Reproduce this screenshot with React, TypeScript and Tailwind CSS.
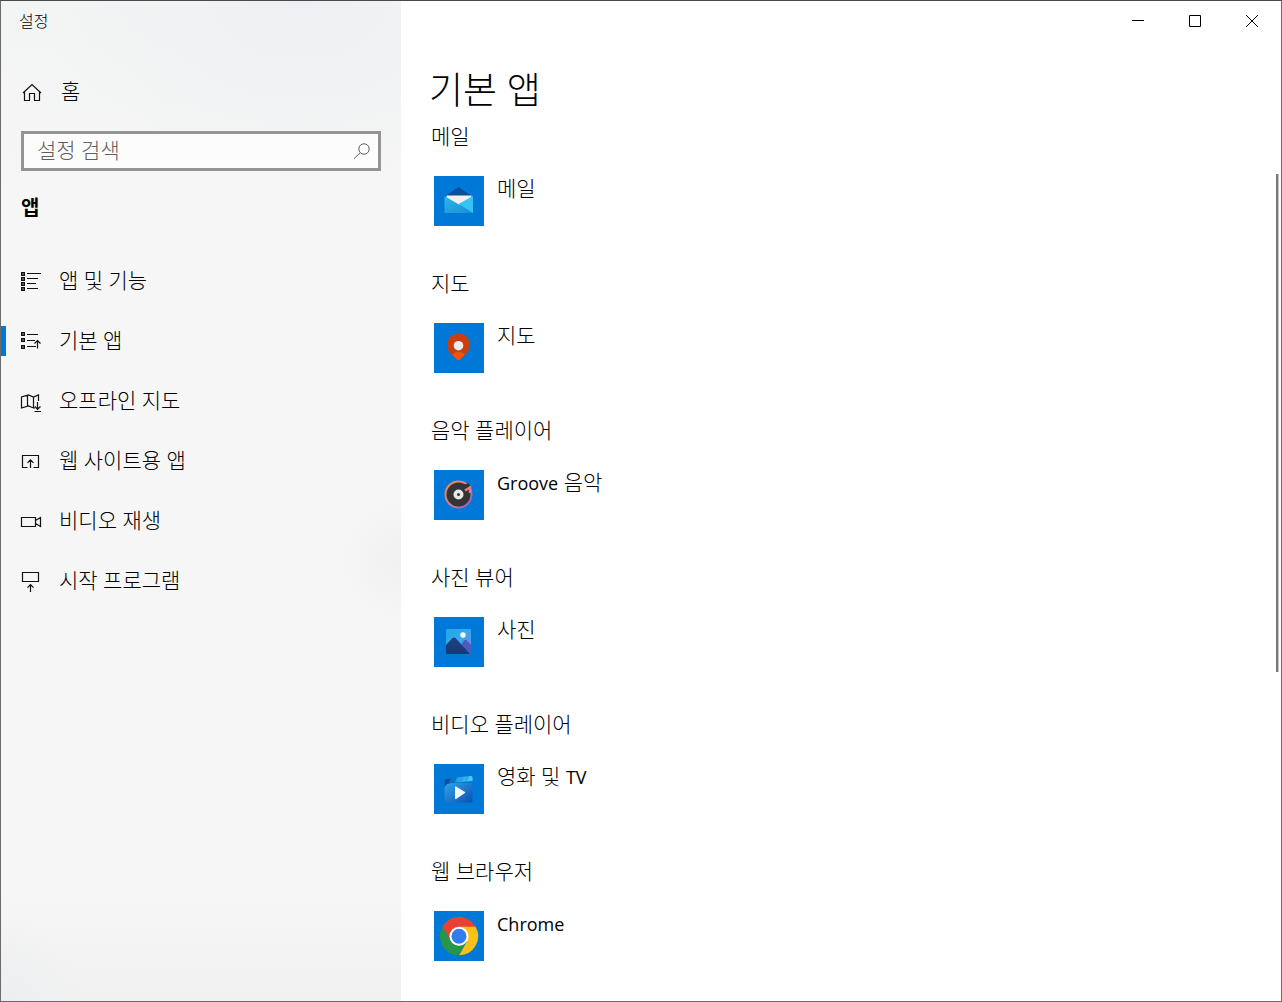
import { useState } from 'react';

/* ─── Sidebar icons ─── */
const stroke = { fill: 'none', stroke: '#111', strokeWidth: 1.2 };

function HomeIcon() {
  return (
    <svg viewBox="0 0 24 24" className="w-6 h-6 shrink-0" {...stroke}>
      <path d="m4 13 9-8.500L22 13M5.500 11.800v8.700h5v-7h5v7h5v-8.700" />
    </svg>
  );
}

function AppsIcon() {
  return (
    <svg viewBox="0 0 24 24" className="w-6 h-6 shrink-0" {...stroke}>
      <path strokeWidth="1.4" d="M2.700 3.700h2.600v2.600H2.700zM2.700 8.700h2.600v2.600H2.700zM2.700 13.700h2.600v2.600H2.700zM2.700 18.700h2.600v2.600H2.700z" />
      <path strokeWidth="1" d="M8 4.500h14M8 9.500h11M8 14.500h9M8 19.500h11" />
    </svg>
  );
}

function DefaultAppsIcon() {
  return (
    <svg viewBox="0 0 24 24" className="w-6 h-6 shrink-0" {...stroke}>
      <path strokeWidth="1.4" d="M2.700 3.700h2.600v2.600H2.700zM2.700 9.700h2.600v2.600H2.700zM2.700 16.700h2.600v2.600H2.700z" />
      <path strokeWidth="1" d="M8 5.500h11M8 11.500h8M8 17.500h9" />
      <path d="M18.500 19.500v-8M15.500 14.500l3-3 3 3" />
    </svg>
  );
}

function OfflineMapIcon() {
  return (
    <svg viewBox="0 0 24 24" className="w-6 h-6 shrink-0" {...stroke}>
      <path d="M19.500 12V6l-5 2-5-2-7 2v11l7-2 5 2H16M8.500 6v11M14.500 8v11M18.500 13v7M16 17.500l2.500 2.800 3-2.800M15.500 22.500H22" />
    </svg>
  );
}

function WebAppsIcon() {
  return (
    <svg viewBox="0 0 24 24" className="w-6 h-6 shrink-0" {...stroke}>
      <path d="M8.500 18.500h-5v-12h16v12h-5M11.500 19v-8M8.500 13.800l3-3 3 3" />
    </svg>
  );
}

function VideoIcon() {
  return (
    <svg viewBox="0 0 24 24" className="w-6 h-6 shrink-0" {...stroke}>
      <path d="M2.500 8.500h14v9h-14zM16.500 11.500l5-3v9l-5-3" />
    </svg>
  );
}

function StartupIcon() {
  return (
    <svg viewBox="0 0 24 24" className="w-6 h-6 shrink-0" {...stroke}>
      <path d="M3.500 3.500h16v9h-16zM11.500 23v-7M8.500 18.700l3-3 3 3" />
    </svg>
  );
}

/* ─── App tiles ─── */
function MailLogo() {
  return (
    <svg viewBox="0 0 50 50" className="w-full h-full">
      <defs>
        <linearGradient id="mail" x1="0" y1="0" x2="1" y2="1">
          <stop offset="0" stopColor="#2fb4ea" />
          <stop offset="1" stopColor="#1590d8" />
        </linearGradient>
      </defs>
      <path fill="#0a4f9c" d="m11.500 20 13-9 13.500 9v4H11.500z" />
      <path fill="#f0f0f2" d="M12.500 19.500h25v2L25 29l-12.500-7z" />
      <path fill="url(#mail)" d="M10.500 20 39 37H10.500z" />
      <path fill="#36c5f2" d="M39 20v17l-14.500-9z" />
    </svg>
  );
}

function MapsLogo() {
  return (
    <svg viewBox="0 0 50 50" className="w-full h-full">
      <path fill="#cb3e0e" d="M24.500 10.500C18 10.500 13 15.500 13 22c0 4 2 7 5 9.500l5 5q1.500 1 3 0l5-5c3-2.500 5-5.500 5-9.500 0-6.500-5-11.500-11.500-11.500" />
      <path fill="#e9561a" d="M18 31.500q6.500-5.500 13 0l-5 5q-1.500 1-3 0z" />
      <circle cx="24.500" cy="22.700" r="4.800" fill="#ececec" />
    </svg>
  );
}

function GrooveLogo() {
  return (
    <svg viewBox="0 0 50 50" className="w-full h-full">
      <defs>
        <linearGradient id="groove" x1="0" y1="0" x2="1" y2="1">
          <stop offset="0.1" stopColor="#f28a4b" />
          <stop offset="0.5" stopColor="#d77b91" />
          <stop offset="1" stopColor="#8b55d6" />
        </linearGradient>
      </defs>
      <circle cx="24.500" cy="24.500" r="14" fill="url(#groove)" />
      <circle cx="24.500" cy="24.500" r="12" fill="#343436" />
      <path fill="#343436" d="m30 15 4-2 2.500 3-4 3z" />
      <path fill="none" stroke="#e07c86" strokeWidth="2.500" d="m31 20.500 5-3v5.500" />
      <circle cx="24.500" cy="24.500" r="5" fill="#e8e8e8" />
      <circle cx="24.500" cy="24.500" r="1.500" fill="#333" />
    </svg>
  );
}

function PhotosLogo() {
  return (
    <svg viewBox="0 0 50 50" className="w-full h-full">
      <defs>
        <linearGradient id="photoSky" x1="0" y1="0" x2="1" y2="1">
          <stop offset="0" stopColor="#20a7e8" />
          <stop offset="0.5" stopColor="#36a9ec" />
          <stop offset="1" stopColor="#8a7bdc" />
        </linearGradient>
        <linearGradient id="photoHill" x1="0" y1="0" x2="0" y2="1">
          <stop offset="0" stopColor="#1c4380" />
          <stop offset="1" stopColor="#153a78" />
        </linearGradient>
      </defs>
      <rect x="12" y="12" width="25" height="25" rx="1" fill="url(#photoSky)" />
      <path fill="#4a5cc0" d="m25 31 5-7.500q1.500-1.500 3 0l4 4.500v8q0 1-1 1H25z" />
      <path fill="url(#photoHill)" d="m12 28 6.500-7q1.500-1 3 0L36 37H13q-1 0-1-1z" />
      <circle cx="29" cy="18" r="2.700" fill="#f4fbff" />
    </svg>
  );
}

function MoviesLogo() {
  return (
    <svg viewBox="0 0 50 50" className="w-full h-full">
      <defs>
        <linearGradient id="movieBody" x1="0" y1="0" x2="1" y2="1">
          <stop offset="0" stopColor="#2fa6e6" />
          <stop offset="1" stopColor="#0a4fb4" />
        </linearGradient>
        <linearGradient id="movieClap" x1="0" y1="0" x2="1" y2="0">
          <stop offset="0" stopColor="#1f95dc" />
          <stop offset="1" stopColor="#46d4fa" />
        </linearGradient>
      </defs>
      <path fill="#0f6cc0" d="m16 15-2 7h6v-7z" />
      <path fill="#0b519f" d="m12 15 4.500-.5-2.500 7L10.500 24v-7q0-2 1.500-2" />
      <path fill="url(#movieClap)" d="m23 13.500 14-1.500q1.500 0 1.500 1.500V17L21 18.500z" />
      <path stroke="#1b9ade" strokeWidth="1" d="m29 12.500-2.500 6M34 12l-2.500 6" />
      <path fill="url(#movieBody)" d="M12 21.500q0-1 1.500-1.500l5-1h19q1 0 1 1v17q0 1.500-1.500 1.500H12q-1.500 0-1.500-1.500V23z" />
      <path fill="#f3f3f3" d="M21 23q0-1 1-.5l9 5.500q.7.500 0 1l-9 6q-1 .5-1-.5z" />
    </svg>
  );
}

function ChromeLogo() {
  return (
    <svg viewBox="0 0 50 50" className="w-full h-full">
      <path fill="#e94235" d="M8.500 15.500a19 19 0 0 1 33 0l.5.500H25l-8.200 14z" />
      <path fill="#fbc116" d="M41.600 15.700A19 19 0 0 1 25 44.200l8.200-14.300L25 15.700z" />
      <path fill="#28964a" d="M25 44.200A19 19 0 0 1 8.600 15.500l8.200 14.300L33 30z" />
      <circle cx="25" cy="25.200" r="9.500" fill="#fff" />
      <circle cx="25" cy="25.200" r="7.500" fill="#347bed" />
    </svg>
  );
}

/* ─── Data ─── */
const NAV_ITEMS = [
  { label: '앱 및 기능', icon: <AppsIcon /> },
  { label: '기본 앱', icon: <DefaultAppsIcon /> },
  { label: '오프라인 지도', icon: <OfflineMapIcon /> },
  { label: '웹 사이트용 앱', icon: <WebAppsIcon /> },
  { label: '비디오 재생', icon: <VideoIcon /> },
  { label: '시작 프로그램', icon: <StartupIcon /> },
];

const latin = 'font-normal text-[18px]';

const DEFAULT_APPS = [
  { category: '메일', app: '메일', logo: <MailLogo /> },
  { category: '지도', app: '지도', logo: <MapsLogo /> },
  { category: '음악 플레이어', app: <><span className={latin}>Groove</span> 음악</>, logo: <GrooveLogo /> },
  { category: '사진 뷰어', app: '사진', logo: <PhotosLogo /> },
  { category: '비디오 플레이어', app: <>영화 및 <span className={latin}>TV</span></>, logo: <MoviesLogo /> },
  { category: '웹 브라우저', app: <span className={latin}>Chrome</span>, logo: <ChromeLogo /> },
];

function Sidebar() {
  const [active, setActive] = useState('기본 앱');
  const [query, setQuery] = useState('');

  return (
    <aside className="w-[400px] shrink-0 bg-[#f6f6f6] bg-[radial-gradient(260px_180px_at_75%_0%,#edeff2_0,#f0f2f3_40%,transparent_100%),radial-gradient(circle_at_100%_56%,#f2f0f1_0,transparent_60px),radial-gradient(circle_at_0%_100%,#eceef1_0,transparent_80px),linear-gradient(to_top,#f1f1f1_0,transparent_110px),linear-gradient(to_bottom,#f3f4f4_0,transparent_200px)]">
      <div className="h-10 pl-[18px] text-[16px] leading-10">설정</div>

      <a href="#home" className="mt-[21px] h-[60px] pl-[18px] flex items-center gap-[17px]">
        <HomeIcon />
        <span className="pl-px">홈</span>
      </a>

      <form
        role="search"
        onSubmit={(e) => e.preventDefault()}
        className="mt-[9px] mx-5 h-10 flex items-center border-3 border-[#949494] bg-[#fcfcfc]"
      >
        <input
          type="text"
          aria-label="설정 검색"
          placeholder="설정 검색"
          value={query}
          onChange={(e) => setQuery(e.target.value)}
          className="flex-1 min-w-0 h-full pl-[13px] pb-[2px] bg-transparent outline-none placeholder:text-[#606060]"
        />
        <button type="submit" aria-label="검색" className="w-8 h-full flex items-center justify-center">
          <svg viewBox="0 0 20 20" className="w-5 h-5" fill="none" stroke="#606060">
            <circle cx="12" cy="8" r="5.200" />
            <path d="m8.300 11.700-6.300 6" />
          </svg>
        </button>
      </form>

      <h2 className="mt-[22px] h-[30px] pl-5 text-[20px] leading-[30px] font-bold">앱</h2>

      <nav className="mt-7">
        {NAV_ITEMS.map((item) => (
          <button
            key={item.label}
            onClick={() => setActive(item.label)}
            className="w-full h-[60px] flex items-center text-left"
          >
            <span className={`w-[5px] h-[30px] mr-[13px] ${active === item.label ? 'bg-[#0078d7]' : ''}`} />
            {item.icon}
            <span className="pl-4">{item.label}</span>
          </button>
        ))}
      </nav>
    </aside>
  );
}

function WindowControls() {
  return (
    <div className="flex justify-end h-10 pr-px">
      <button aria-label="최소화" className="w-[57px] flex items-center justify-center">
        <svg viewBox="0 0 12 12" className="w-3 h-3" stroke="#000"><path d="M0 5.500h12" /></svg>
      </button>
      <button aria-label="최대화" className="w-[57px] flex items-center justify-center">
        <svg viewBox="0 0 12 12" className="w-3 h-3" fill="none" stroke="#000"><path d="M.5.5h11v11H.5z" /></svg>
      </button>
      <button aria-label="닫기" className="w-[57px] flex items-center justify-center">
        <svg viewBox="0 0 12 12" className="w-3 h-3" stroke="#000"><path d="m0 0 12 12M12 0 0 12" /></svg>
      </button>
    </div>
  );
}

export default function App() {
  return (
    <div className="h-screen flex overflow-hidden border border-[#6b6b6b] border-t-[#484848] bg-white text-black text-[21px] font-light font-['Open_Sans','Noto_Sans_CJK_KR',sans-serif]">
      <Sidebar />

      <main className="relative flex-1 min-w-0 flex flex-col">
        <WindowControls />
        <h1 className="mt-5 h-[60px] pl-7 text-[37px] leading-[58px]">기본 앱</h1>

        <div className="flex-1 min-h-0 overflow-hidden pt-px pl-[30px]">
          {DEFAULT_APPS.map((item) => (
            <section key={item.category} className="h-[147px]">
              <h2 className="h-7 leading-7">{item.category}</h2>
              <button className="mt-[26px] ml-[3px] flex items-start gap-[13px] text-left">
                <span className="w-[50px] h-[50px] bg-[#0078d7]">{item.logo}</span>
                <span className="leading-6">{item.app}</span>
              </button>
            </section>
          ))}
        </div>

        {/* Scroll thumb */}
        <div className="absolute right-[2px] top-[173px] w-[3px] h-[498px] bg-[#7a7a7a] border-r border-[#c4c4c4]" />
      </main>
    </div>
  );
}
